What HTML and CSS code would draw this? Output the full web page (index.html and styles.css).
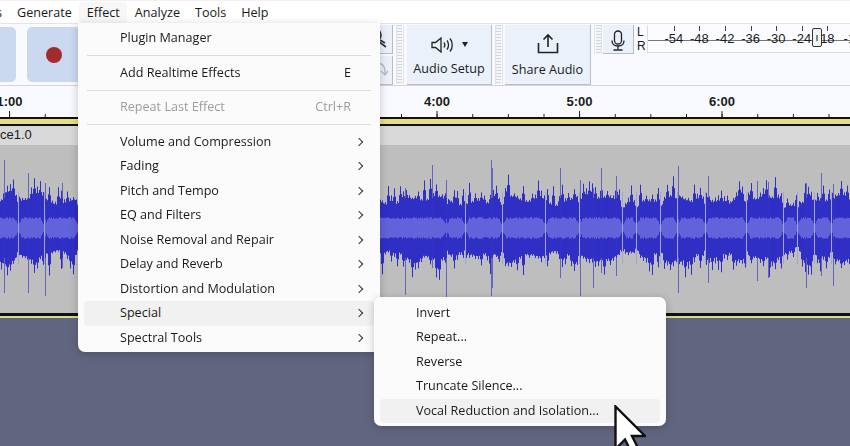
FILE: index.html
```html
<!DOCTYPE html>
<html lang="en">
<head>
    <meta charset="UTF-8">
    <meta name="viewport" content="width=device-width, initial-scale=1.0">
    <title>Audacity</title>
    <link rel="stylesheet" href="styles.css">
</head>
<body>
    <!-- Menu bar -->
    <div class="menubar">
        <span class="menu-cut">s</span>
        <span class="menu-name">Generate</span>
        <span class="menu-name open">Effect</span>
        <span class="menu-name">Analyze</span>
        <span class="menu-name">Tools</span>
        <span class="menu-name">Help</span>
    </div>

    <!-- Toolbars -->
    <div class="toolbar">
        <div class="transport-btn first"></div>
        <div class="transport-btn record"><span class="record-dot"></span></div>
        <div class="tool-stack">
            <div class="tool-btn">
                <svg width="25" height="28" viewBox="0 0 25 28" fill="none" stroke="#333" stroke-width="1.6">
                    <circle cx="8" cy="10" r="6"/>
                    <path d="M11 16l8 6M13 15l5 3"/>
                </svg>
            </div>
            <div class="tool-btn">
                <svg width="25" height="29" viewBox="0 0 25 29" fill="none" stroke="#b9bcc2" stroke-width="1.4">
                    <path d="M7 7c6-1 11 2 11 8v3M14 15l4 4 3-4"/>
                </svg>
            </div>
        </div>
        <div class="grip"></div>
        <div class="big-btn setup-btn">
            <div class="big-icon">
                <svg width="22" height="16" viewBox="0 0 22 16" fill="none" stroke="#222" stroke-width="1.3">
                    <path d="M1 5.5h3.5L10 1v14l-5.500-4.500H1z"/>
                    <path d="M13 5.500c1 1.500 1 3.500 0 5M16 3.500c2 2.500 2 6.500 0 9M19 1.500c3 3.500 3 9.500 0 13"/>
                </svg>
                <span class="drop-arrow"></span>
            </div>
            <span class="big-label">Audio Setup</span>
        </div>
        <div class="grip"></div>
        <div class="big-btn share-btn">
            <div class="big-icon">
                <svg width="22" height="21" viewBox="0 0 22 21" fill="none" stroke="#222" stroke-width="1.6">
                    <path d="M11 14V2M6.500 6.500L11 2l4.500 4.500"/>
                    <path d="M1.500 10v9.500h19V10"/>
                </svg>
            </div>
            <span class="big-label">Share Audio</span>
        </div>
        <div class="grip short"></div>
        <div class="mic-btn">
            <svg width="14" height="21" viewBox="0 0 14 21" fill="none" stroke="#222" stroke-width="1.3">
                <rect x="3.500" y="1" width="7" height="13" rx="3.500"/>
                <path d="M1 10.500c0 3.500 2.500 5.500 6 5.500s6-2 6-5.500M7 16v3M2.500 20h9"/>
            </svg>
        </div>
        <div class="lr-labels"><span>L</span><span>R</span></div>
        <div class="meter">
            <span class="meter-num">-54</span>
            <span class="meter-num">-48</span>
            <span class="meter-num">-42</span>
            <span class="meter-num">-36</span>
            <span class="meter-num">-30</span>
            <span class="meter-num">-24</span>
            <span class="meter-num">18</span>
            <span class="meter-num">-12</span>
            <span class="meter-thumb"></span>
        </div>
    </div>

    <!-- Timeline -->
    <div class="ruler">
        <span class="ruler-cell">1:00</span>
        <span class="ruler-cell"></span>
        <span class="ruler-cell"></span>
        <span class="ruler-cell">4:00</span>
        <span class="ruler-cell">5:00</span>
        <span class="ruler-cell">6:00</span>
    </div>

    <!-- Track -->
    <div class="track">
        <div class="track-title">ce1.0</div>
        <canvas id="wave" class="wave" width="850" height="168"></canvas>
        <div class="track-end"></div>
    </div>
    <div class="empty-area"></div>

    <!-- Effect menu -->
    <div class="dropdown effect-menu">
        <div class="item">Plugin Manager</div>
        <div class="sep"></div>
        <div class="item"><span>Add Realtime Effects</span><span class="shortcut">E</span></div>
        <div class="sep"></div>
        <div class="item disabled"><span>Repeat Last Effect</span><span class="shortcut">Ctrl+R</span></div>
        <div class="sep"></div>
        <div class="item sub">Volume and Compression</div>
        <div class="item sub">Fading</div>
        <div class="item sub">Pitch and Tempo</div>
        <div class="item sub">EQ and Filters</div>
        <div class="item sub">Noise Removal and Repair</div>
        <div class="item sub">Delay and Reverb</div>
        <div class="item sub">Distortion and Modulation</div>
        <div class="item sub active">Special</div>
        <div class="item sub">Spectral Tools</div>
    </div>

    <!-- Special submenu -->
    <div class="dropdown special-menu">
        <div class="item">Invert</div>
        <div class="item">Repeat...</div>
        <div class="item">Reverse</div>
        <div class="item">Truncate Silence...</div>
        <div class="item active">Vocal Reduction and Isolation...</div>
    </div>

    <svg class="cursor" width="32" height="46" viewBox="0 0 32 46">
        <path d="M1.500 1.500V44l9.500-9.500 6.500 13 7-3.500-6.500-13h13z" fill="#fff" stroke="#111" stroke-width="2.400" stroke-linejoin="miter"/>
    </svg>

    <script src="waveform.js"></script>
</body>
</html>
```

FILE: styles.css
```css
body {
    margin: 0;
    width: 850px;
    height: 446px;
    overflow: hidden;
    position: relative;
    background-color: #62657f;
    font-family: "Open Sans", "Noto Sans", sans-serif;
    font-size: 12.6px;
    color: #1a1a1a;
}

/* Menu bar */
.menubar {
    display: flex;
    height: 23px;
    box-sizing: border-box;
    padding-top: 1px;
    align-items: stretch;
    background-color: #fff;
    border-top: 1px solid #f6f0f3;
}

.menu-cut {
    width: 9.5px;
    line-height: 22px;
    margin-left: -4px;
    margin-right: 4px;
}

.menu-name {
    padding: 0 7.5px;
    line-height: 22px;
}

.menu-name.open {
    background-color: #f7f7f7;
    border-radius: 4px 4px 0 0;
}

/* Toolbars */
.toolbar {
    display: flex;
    height: 63px;
    box-sizing: border-box;
    padding-top: 1px;
    background-color: #f8faff;
    border-top: 1px solid #e4e4e6;
    border-bottom: 1px solid #d5d6da;
}

.transport-btn {
    height: 55px;
    margin-top: 2px;
    background-color: #cbd9f0;
    border-radius: 5px;
    display: flex;
    align-items: center;
    justify-content: center;
}

.transport-btn.first {
    width: 16px;
    border-radius: 0 5px 5px 0;
    margin-right: 11px;
}

.transport-btn.record {
    width: 66px;
    margin-right: 275px;
    justify-content: flex-start;
    padding-left: 19px;
    box-sizing: border-box;
}

.record-dot {
    width: 16px;
    height: 16px;
    border-radius: 50%;
    background-color: #a12c2e;
}

.tool-stack {
    width: 25px;
    display: flex;
    flex-direction: column;
    gap: 2px;
}

.tool-btn {
    height: 28px;
    background-color: #ebf1fb;
    border-right: 1px solid #b9bdc5;
    border-bottom: 1px solid #b9bdc5;
    overflow: hidden;
}

.tool-btn svg {
    display: block;
    margin-left: -1px;
}

.grip {
    width: 8px;
    height: 59px;
    margin: 0 2.5px;
    box-sizing: border-box;
    background: repeating-linear-gradient(to bottom, #d2d5db 0, #d2d5db 1px, #f4f5f8 1px, #f4f5f8 3px);
    background-size: 5px 100%;
    background-repeat: no-repeat;
    background-position: center;
    border-left: 1px solid #e2e3e6;
    border-right: 1px solid #e2e3e6;
}

.grip.short {
    height: 29px;
    margin: 0 1px 0 3px;
}

.big-btn {
    height: 60px;
    box-sizing: border-box;
    display: flex;
    flex-direction: column;
    align-items: center;
    background-color: #ebf1fb;
    border-right: 1px solid #b9bdc5;
    border-bottom: 1px solid #b9bdc5;
}

.setup-btn {
    width: 85px;
    margin-left: 1px;
}

.share-btn {
    width: 86px;
}

.big-icon {
    height: 35px;
    box-sizing: border-box;
    display: flex;
    align-items: flex-start;
    gap: 9px;
    padding-top: 12px;
}

.share-btn .big-icon {
    padding-top: 8px;
}

.big-label {
    line-height: 17px;
    white-space: nowrap;
}

.share-btn .big-label {
    padding-top: 1px;
}

.drop-arrow {
    width: 0;
    height: 0;
    margin-top: 5px;
    border-left: 3.5px solid transparent;
    border-right: 3.5px solid transparent;
    border-top: 5px solid #222;
}

.mic-btn {
    width: 31px;
    height: 29px;
    box-sizing: border-box;
    padding-top: 5px;
    display: flex;
    justify-content: center;
    background-color: #ebf1fb;
    border-right: 1px solid #b9bdc5;
    border-bottom: 1px solid #b9bdc5;
}

.lr-labels {
    width: 13px;
    height: 28px;
    padding-left: 3px;
    box-sizing: border-box;
    display: flex;
    flex-direction: column;
    justify-content: space-between;
    font-family: "Liberation Sans", sans-serif;
    font-size: 12px;
    line-height: 14px;
}

.meter {
    position: relative;
    flex: 1;
    height: 28px;
    box-sizing: border-box;
    padding-left: 13px;
    display: flex;
    background: linear-gradient(#777, #777) 0 15px / 100% 1px no-repeat #fbfcff;
    border-left: 1px solid #dcdde0;
    border-bottom: 1px solid #dcdde0;
    overflow: hidden;
}

.meter-num {
    position: relative;
    flex: 0 0 25.6px;
    text-align: center;
    font-family: "Liberation Sans", sans-serif;
    font-size: 13px;
    line-height: 28px;
    white-space: nowrap;
}

.meter-num::before {
    content: "";
    position: absolute;
    left: 50%;
    top: 1px;
    width: 1px;
    height: 5px;
    background-color: #444;
}

.meter-thumb {
    position: absolute;
    left: 164px;
    top: 3px;
    width: 10px;
    height: 19px;
    box-sizing: border-box;
    border: 1px solid #333;
    border-radius: 2px;
    background: linear-gradient(#888, #888) center / 2px 6px no-repeat #f4f4f4;
}

/* Timeline */
.ruler {
    display: flex;
    height: 31px;
    margin-left: -61.75px;
    background-color: #f8faff;
    background-image: linear-gradient(to right, #222 1px, transparent 1px), linear-gradient(to right, #222 1px, transparent 1px);
    background-size: 142.5px 6px, 35.625px 3px;
    background-position: 71px bottom, 35.5px bottom;
    background-repeat: repeat-x;
}

.ruler-cell {
    position: relative;
    flex: 0 0 142.5px;
    text-align: center;
    font-family: "Liberation Sans", sans-serif;
    font-weight: bold;
    font-size: 13px;
    line-height: 32px;
}

/* Track */
.track {
    border-top: 2px solid #111;
}

.track-title {
    height: 26px;
    box-sizing: border-box;
    background-color: #d9d9d9;
    border-top: 5px solid #e6df82;
    font-family: "Liberation Sans", sans-serif;
    font-size: 13px;
    line-height: 22px;
    box-shadow: inset 0 2px 0 #111;
}

.wave {
    display: block;
    background-color: #bebebe;
    filter: blur(0.35px);
}

.track-end {
    height: 5px;
    background-color: #dcd98e;
    border-top: 3px solid #111;
    box-sizing: border-box;
}

.empty-area {
    height: 128px;
}

/* Dropdown menus */
.dropdown {
    position: absolute;
    box-sizing: border-box;
    background-color: #fbfbfb;
    border-radius: 7px;
    box-shadow: 0 2px 8px rgba(0, 0, 0, 0.22);
}

.effect-menu {
    left: 78px;
    top: 23px;
    width: 302px;
    height: 329px;
    padding: 3.25px 6px;
    border-radius: 0 0 7px 7px;
}

.special-menu {
    left: 374px;
    top: 297px;
    width: 292px;
    height: 129px;
    padding: 3.75px 6px;
}

.item {
    height: 24.5px;
    line-height: 24.5px;
    padding-left: 36px;
    padding-right: 23px;
    display: flex;
    justify-content: space-between;
    border-radius: 4px;
    position: relative;
}

.item.disabled {
    color: #9d9d9d;
}

.item.active {
    background-color: #f1f1f1;
}

/* chevron on items with a submenu */
.item.sub::after {
    content: "";
    position: absolute;
    right: 12px;
    top: 9px;
    width: 5px;
    height: 5px;
    border-top: 1.3px solid #333;
    border-right: 1.3px solid #333;
    transform: rotate(45deg);
}

.sep {
    height: 10px;
    margin: 0 3px;
    background: linear-gradient(#dcdcdc, #dcdcdc) center / 100% 1px no-repeat;
}

.cursor {
    position: absolute;
    left: 614px;
    top: 405px;
}
```

FILE: waveform.js
```js
const canvas = document.getElementById('wave');
const ctx = canvas.getContext('2d');
const mid = 83;

// Columns where the signal drops between beats
const beats = [18, 44, 78, 446, 465, 502, 545, 579, 622, 636, 660, 677, 705, 746, 783, 797, 814, 831];

// Tall peaks read off the reference: x, height above, height below
const spikes = [
    [4, 68, 65], [28, 55, 65], [45, 45, 68], [62, 45, 40],
    [405, 40, 67], [432, 63, 40], [446, 48, 69], [491, 68, 68], [492, 60, 60],
    [560, 60, 50], [580, 48, 68], [593, 40, 60], [601, 60, 45], [616, 52, 48],
    [678, 62, 65], [708, 52, 55], [757, 47, 53], [768, 46, 50], [806, 45, 60],
    [821, 55, 48], [833, 44, 58]
];

// Small seeded generator so every run draws the same wave
let seed = 4711;
function rand() {
    seed = (seed * 16807) % 2147483647;
    return seed / 2147483647;
}

function beatDistance(x) {
    let best = 100;
    for (const b of beats) {
        best = Math.min(best, Math.abs(x - b));
    }
    return best;
}

function column(x, up, down, color) {
    ctx.fillStyle = color;
    ctx.fillRect(x, mid - up, 1, up + down);
}

// Teeth on the outer edge, each about 3px wide and pointed in the middle
function makeTeeth() {
    const teeth = [];
    for (let x = 0; x < canvas.width; x += 3) {
        const h = 3 + 21 * Math.pow(rand(), 1.6);
        teeth.push(h * 0.55, h, h * 0.55);
    }
    return teeth;
}

const topTeeth = makeTeeth();
const bottomTeeth = makeTeeth();

for (let x = 0; x < canvas.width; x++) {
    const dist = beatDistance(x);
    const shape = Math.min(1, 0.7 + dist / 12);
    const body = (25 + 3 * Math.sin(x / 13) + 2 * Math.sin(x / 5.3)) * shape;

    column(x, body + topTeeth[x] * shape, body + bottomTeeth[x] * shape, '#2f2fc6');

    // lighter body in the middle
    const inner = Math.min(1, 0.2 + dist / 5) * 9 + rand() * 2;
    column(x, inner, inner, '#6262da');

    if (dist === 0) {
        column(x, 36, 36, '#a3a3cf');
    }
}

for (const s of spikes) {
    column(s[0], s[1], s[2], '#6565be');
    column(s[0], 30, 30, '#3232c6');
    column(s[0], 9, 9, '#6262da');
}
```
